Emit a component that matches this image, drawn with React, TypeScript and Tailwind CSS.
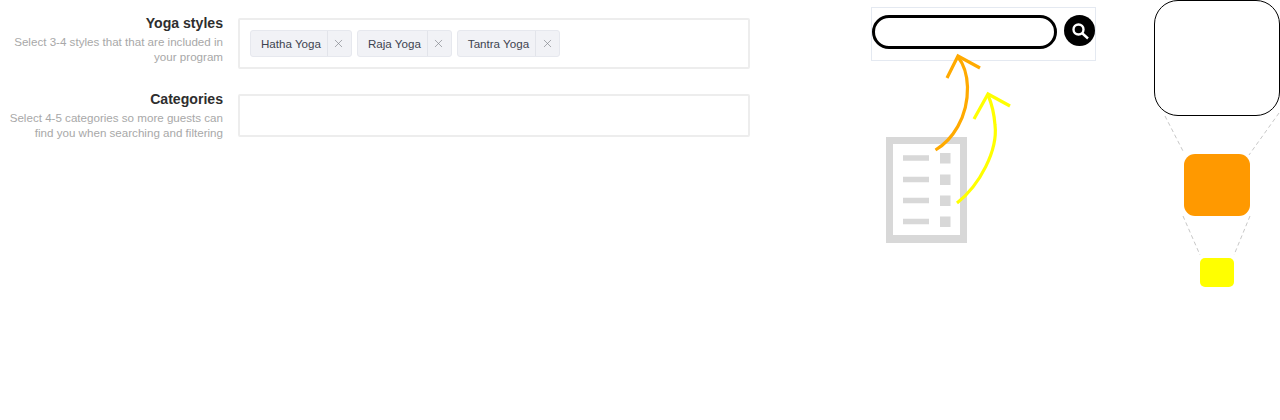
import { X } from "lucide-react";

function Chip({ label }: { label: string }) {
  return (
    <div className="flex h-[27px] items-stretch rounded-[3px] border border-[#e6e8ee] bg-[#f1f2f6]">
      <span className="flex items-center whitespace-nowrap pl-[10px] pr-[6px] text-[11.6px] text-[#3d4350]">{label}</span>
      <span className="flex w-[24px] items-center justify-center border-l border-[#e2e4ea] pr-[1px] text-[#7d8087]">
        <X size={13} strokeWidth={1.2} />
      </span>
    </div>
  );
}

function FieldRow({ title, lines, children, boxClass }: { title: string; lines: string[]; children?: React.ReactNode; boxClass: string }) {
  return (
    <div className="flex items-start">
      <div className="w-[223px] text-right">
        <div className="mt-[-3px] text-[14.1px] leading-[17px] font-bold text-[#2e2e2e]">{title}</div>
        <div className="mt-[2px] text-[11.6px] leading-[15px] text-[#a8a8a8]">
          {lines.map((l) => (
            <div key={l} className="whitespace-nowrap">{l}</div>
          ))}
        </div>
      </div>
      <div className={`ml-[15px] flex w-[512px] items-center rounded-[2px] border-2 border-[#ededed] bg-white pl-[10px] ${boxClass}`}>
        {children}
      </div>
    </div>
  );
}

export default function App() {
  return (
    <div className="relative h-[420px] w-[1280px] overflow-hidden bg-white font-['Liberation_Sans',Arial,sans-serif]">
      <div className="flex w-[750px] flex-col gap-[25px] pt-[18px]">
        <FieldRow
          title="Yoga styles"
          lines={["Select 3-4 styles that that are included in", "your program"]}
          boxClass="h-[51px]"
        >
          <div className="flex gap-[5px]">
            <Chip label="Hatha Yoga" />
            <Chip label="Raja Yoga" />
            <Chip label="Tantra Yoga" />
          </div>
        </FieldRow>
        <FieldRow
          title="Categories"
          lines={["Select 4-5 categories so more guests can", "find you when searching and filtering"]}
          boxClass="h-[43px]"
        />
      </div>

      {/* search annotation */}
      <div className="absolute left-[871px] top-[7px] flex h-[54px] w-[225px] items-start border border-[#e4e9f1] pt-[7px]">
        <div className="h-[34px] w-[186px] rounded-[17px] border-[3px] border-black bg-white" />
        <div className="ml-[7px] flex h-[31px] w-[31px] items-center justify-center rounded-full bg-black">
          <svg width="20" height="20" viewBox="0 0 20 20" fill="none" stroke="white">
            <circle cx="8.5" cy="8.5" r="5" strokeWidth="2.4" />
            <path d="M12.5 12.5L18 17.5" strokeWidth="2.4" />
          </svg>
        </div>
      </div>

      {/* document icon */}
      <svg className="absolute left-[880px] top-[130px]" width="95" height="120" viewBox="880 130 95 120" fill="#d8d8d8">
        <path fillRule="evenodd" d="M886 137H967V243H886ZM893 144V235H960V144Z" />
        {[158, 179.5, 200.5, 221.5].map((y) => (
          <g key={y}>
            <rect x="903" y={y - 2.75} width="26" height="5.5" />
            <rect x="940" y={y - 5} width="10.5" height="10.5" />
          </g>
        ))}
      </svg>

      {/* arrows */}
      <svg className="absolute left-[920px] top-[45px]" width="100" height="170" viewBox="920 45 100 170" fill="none" strokeWidth="3.2">
        <path d="M935.5 150C952 140 968 118 967.5 87C967 72 962 62 958 57" stroke="#ffaa00" />
        <path d="M947 78L958 56L980 68" stroke="#ffaa00" />
        <path d="M957 203C980 185 998 150 995 125C994 112 991 102 988 95" stroke="#ffff00" />
        <path d="M974 119L988 94L1010 106" stroke="#ffff00" />
      </svg>

      {/* shapes */}
      <div className="absolute left-[1154px] top-[0px] h-[116px] w-[126px] rounded-[24px] border-[1.5px] border-black bg-white" />
      <div className="absolute left-[1184px] top-[154px] h-[62px] w-[66px] rounded-[11px] bg-[#ff9900]" />
      <div className="absolute left-[1200px] top-[258px] h-[29px] w-[34px] rounded-[5px] bg-[#ffff00]" />
      <svg className="absolute left-[1160px] top-[110px]" width="120" height="150" viewBox="1160 110 120 150" fill="none" stroke="#c8c8c8" strokeWidth="1" strokeDasharray="4 3">
        <path d="M1165 116L1184 153" />
        <path d="M1279 113L1249 155" />
        <path d="M1183 216L1200 255" />
        <path d="M1250 216L1234 255" />
      </svg>
    </div>
  );
}
